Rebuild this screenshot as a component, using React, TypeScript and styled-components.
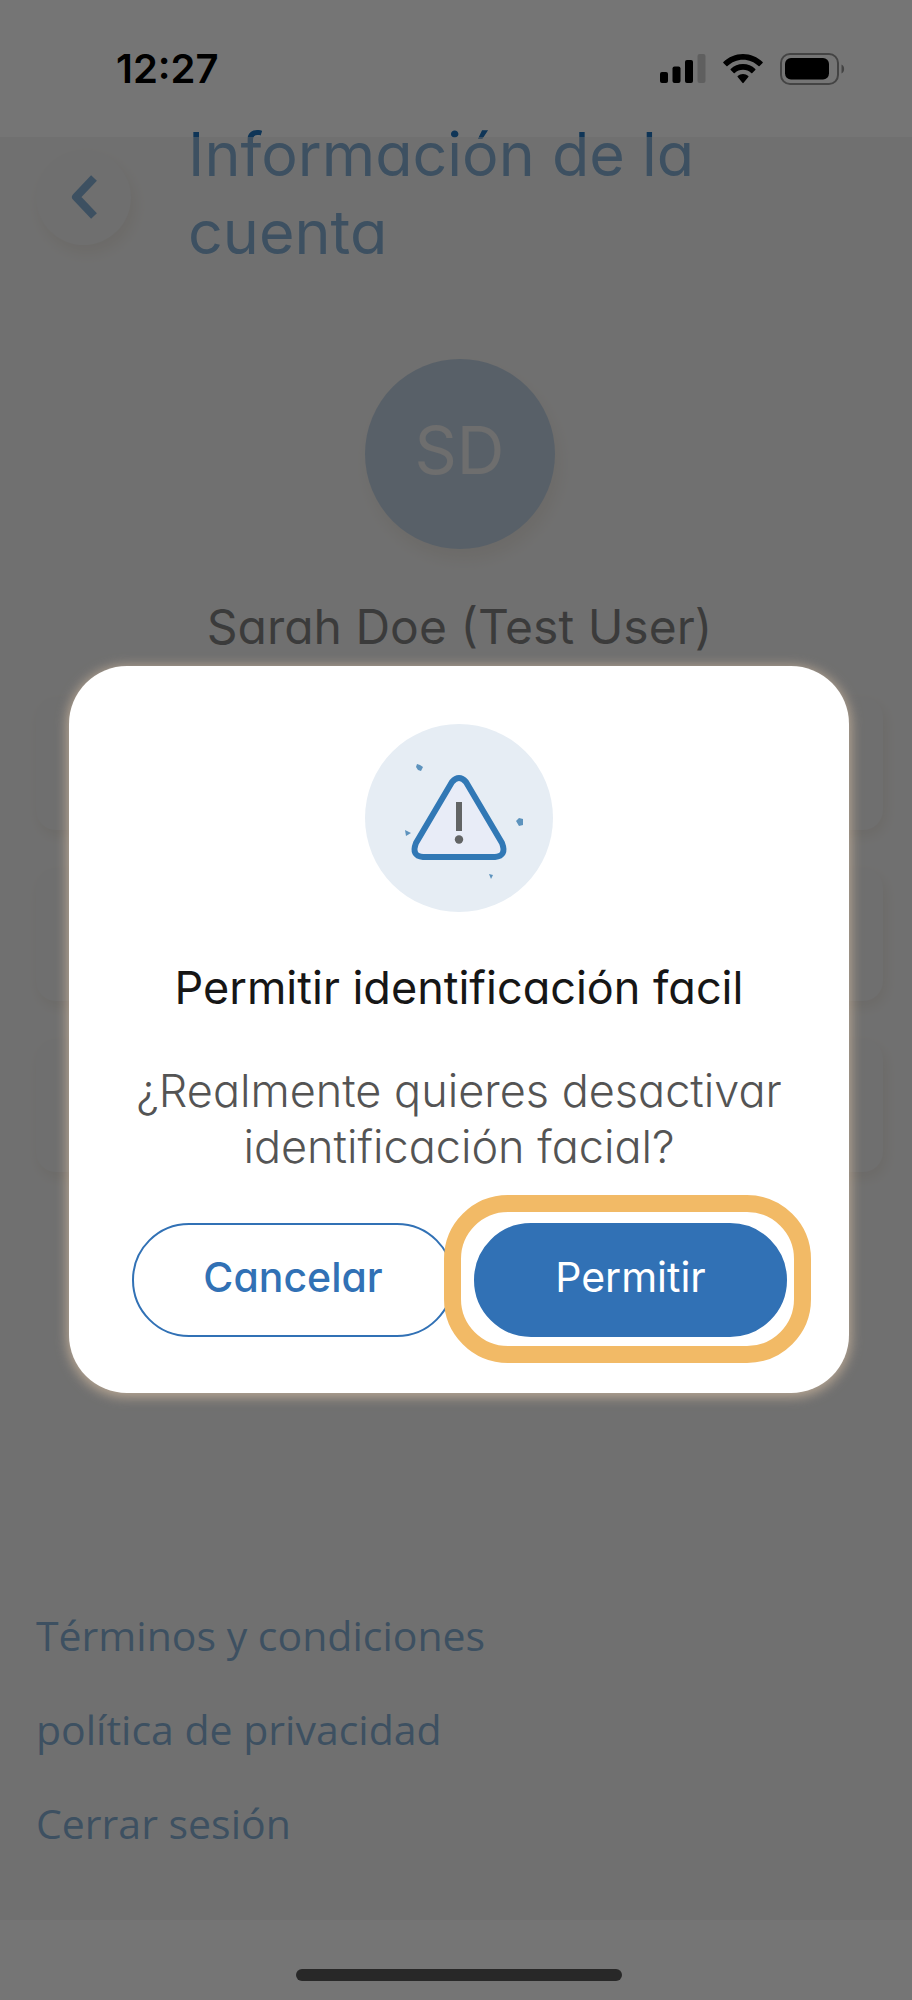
import React from "react";
import styled, { createGlobalStyle } from "styled-components";

const blue = "#3171b5";
const pageBlue = "#2175bd";
const rounded = `"Inter", "Lato", sans-serif`;

const GlobalStyle = createGlobalStyle`
  * { box-sizing: border-box; }
  body { margin: 0; background: #fff; font-family: ${rounded}; font-feature-settings: "cv11"; }
  h1, h2, p, ul { margin: 0; padding: 0; font-weight: 400; }
  button { font: inherit; font-feature-settings: inherit; cursor: pointer; }
`;

const Screen = styled.div`
  position: relative;
  display: flex;
  flex-direction: column;
  min-height: 100vh;
  background: #fff;
`;

const StatusBar = styled.div`
  display: flex;
  align-items: center;
  justify-content: space-between;
  height: 137px;
  padding: 0 67px 0 116px;
`;

const Time = styled.time`
  font-size: 40px;
  font-weight: 600;
  line-height: 48px;
  color: #000;
`;

const StatusIcons = styled.div`
  display: flex;
  align-items: center;
  gap: 17px;
  svg { display: block; }
`;

const Content = styled.main`
  position: relative;
  flex: 1;
  display: flex;
  flex-direction: column;
  padding: 0 29px 70px 36px;

  /* translucent veil over the page while a dialog is open */
  &::after {
    content: "";
    position: absolute;
    inset: 0;
    background: rgba(233, 233, 233, 0.5);
    pointer-events: none;
  }
`;

const Header = styled.header`
  display: flex;
  align-items: center;
  gap: 57px;
  margin-top: -22px;
`;

const BackButton = styled.button`
  display: flex;
  align-items: center;
  justify-content: center;
  flex: none;
  width: 95px;
  height: 95px;
  border: 0;
  border-radius: 50%;
  background: #f8f8f8;
  box-shadow: 4px 8px 16px rgba(190, 165, 130, 0.3);
`;

const Title = styled.h1`
  flex: 1;
  max-width: 560px;
  padding-bottom: 8px;
  font-size: 61px;
  line-height: 78px;
  color: ${pageBlue};
`;

const Profile = styled.section`
  display: flex;
  flex-direction: column;
  align-items: center;
  gap: 48px;
  margin-top: 80px;
`;

const Avatar = styled.div`
  display: flex;
  align-items: center;
  justify-content: center;
  width: 190px;
  height: 190px;
  padding-bottom: 8px;
  border-radius: 50%;
  background: #96b9dc;
  box-shadow: 4px 10px 18px rgba(190, 165, 130, 0.3);
  font-size: 66px;
  color: #f4f4f4;
`;

const Name = styled.h2`
  font-size: 48px;
  line-height: 60px;
  color: #181818;
`;

const Cards = styled.ul`
  display: flex;
  flex-direction: column;
  gap: 38px;
  margin-top: 40px;
  list-style: none;
`;

const Card = styled.li`
  height: 133px;
  border-radius: 20px;
  background: #f8f8f8;
  box-shadow: 3px 6px 14px rgba(190, 165, 130, 0.3);
`;

const Links = styled.nav`
  display: flex;
  flex-direction: column;
  align-items: flex-start;
  gap: 40px;
  margin-top: auto;
`;

const FooterLink = styled.a`
  font-family: "Open Sans", sans-serif;
  font-size: 41px;
  line-height: 54px;
  color: ${pageBlue};
  text-decoration: none;
`;

const HomeArea = styled.div`
  display: flex;
  justify-content: center;
  height: 80px;
  padding: 49px 0 0 6px;
`;

const HomeIndicator = styled.div`
  width: 36%;
  height: 12px;
  border-radius: 6px;
  background: #575757;
`;

const Scrim = styled.div`
  position: absolute;
  inset: 0;
  display: flex;
  align-items: center;
  justify-content: center;
  padding: 58px 63px 0 69px;
  background: rgba(0, 0, 0, 0.54);
`;

const Dialog = styled.section`
  display: flex;
  flex-direction: column;
  align-items: center;
  width: 100%;
  padding: 58px 40px 56px;
  border-radius: 58px;
  background: #fff;
  box-shadow: 0 2px 12px 2px rgba(214, 190, 162, 0.7);
  text-align: center;
  svg { display: block; }
`;

const DialogTitle = styled.h2`
  margin-top: 50px;
  font-size: 45px;
  line-height: 52px;
  color: #161616;
`;

const Message = styled.p`
  margin-top: 49px;
  font-size: 45px;
  line-height: 56px;
  font-weight: 300;
  color: #545454;
`;

const Actions = styled.div`
  display: grid;
  grid-template-columns: 322fr 313fr;
  gap: 20px;
  width: 100%;
  margin-top: 48px;
  padding: 0 22px 0 23px;
`;

const ActionButton = styled.button<{ $primary?: boolean }>`
  width: 100%;
  height: 114px;
  padding: 0 0 6px;
  border: 2px solid ${blue};
  border-radius: 57px;
  background: ${(p) => (p.$primary ? blue : "#fff")};
  color: ${(p) => (p.$primary ? "#fff" : blue)};
  font-size: 41px;
  font-weight: ${(p) => (p.$primary ? 400 : 500)};
`;

const Highlighted = styled.div`
  position: relative;

  &::after {
    content: "";
    position: absolute;
    inset: -28px -24px -26px -30px;
    border: 17px solid #f2ba66;
    border-radius: 64px;
    pointer-events: none;
  }
`;

const SignalIcon = () => (
  <svg width="46" height="30" viewBox="0 0 46 30" aria-hidden="true">
    <rect x="0" y="18" width="8" height="11" rx="2" />
    <rect x="12.500" y="12.500" width="8" height="16.500" rx="2" />
    <rect x="25" y="6" width="8" height="23" rx="2" />
    <rect x="37.500" y="0" width="8" height="29" rx="2" fill="#d0d0d0" />
  </svg>
);

const WifiIcon = () => (
  <svg width="40" height="30" viewBox="0 0 40 30" aria-hidden="true">
    <path d="M20 0C12.500 0 5.500 3 .4 8a.8.800 0 0 0 0 1.100l3 3a.8.800 0 0 0 1.100 0C8.600 8.100 14.100 5.800 20 5.800s11.400 2.300 15.500 6.300a.8.800 0 0 0 1.100 0l3-3a.8.800 0 0 0 0-1.100C34.500 3 27.500 0 20 0Z" />
    <path d="M20 10c-4.700 0-9 1.800-12.300 4.900a.8.800 0 0 0 0 1.100l3 3a.8.800 0 0 0 1.100 0c2.200-2 5.100-3.200 8.200-3.200s6 1.200 8.200 3.200a.8.800 0 0 0 1.100 0l3-3a.8.800 0 0 0 0-1.100C29 11.800 24.700 10 20 10Z" />
    <path d="M20 20c-2 0-3.900.8-5.300 2a.8.800 0 0 0 0 1.100l4.700 5.700a.8.800 0 0 0 1.200 0l4.700-5.700a.8.800 0 0 0 0-1.100C23.900 20.800 22 20 20 20Z" />
  </svg>
);

const BatteryIcon = () => (
  <svg width="65" height="32" viewBox="0 0 65 32" aria-hidden="true">
    <rect x="1" y="1" width="57" height="30" rx="9" fill="none" stroke="#959595" strokeWidth="2" />
    <rect x="5" y="5" width="44" height="21.500" rx="6" />
    <path d="M61.500 11.500c3.500 1.500 3.500 7.500 0 9Z" fill="#959595" />
  </svg>
);

const ChevronIcon = () => (
  <svg width="30" height="46" viewBox="0 0 30 46" aria-hidden="true">
    <path d="M25 4 7 23l18 19" fill="none" stroke={pageBlue} strokeWidth="8" strokeLinejoin="round" />
  </svg>
);

const WarningIcon = () => (
  <svg width="188" height="188" viewBox="0 0 188 188" aria-hidden="true">
    <circle cx="94" cy="94" r="94" fill="#e6edf4" />
    <path
      d="M87 58Q94 50 101 58L137 119Q142 132 130 133H58Q46 132 51 119Z"
      fill="#e8ecf7"
      stroke="#3178b5"
      strokeWidth="6"
      strokeLinejoin="round"
    />
    <path d="M94 78v29" stroke="#626465" strokeWidth="6" />
    <circle cx="94" cy="115.500" r="4.200" fill="#626465" />
    <g fill="#5d93bd">
      <path d="m52 40 3 1 3 2-2 4-3-1-2-3Z" />
      <path d="m40 106 6 3-5 3Z" />
      <path d="m151 97 3-3 4 1v6l-4 1Z" />
      <path d="m124 150 4 1-2 4Z" />
    </g>
  </svg>
);

export default function App() {
  return (
    <>
      <GlobalStyle />
      <Screen>
        <StatusBar>
          <Time>12:27</Time>
          <StatusIcons>
            <SignalIcon />
            <WifiIcon />
            <BatteryIcon />
          </StatusIcons>
        </StatusBar>
        <Content>
          <Header>
            <BackButton aria-label="Volver">
              <ChevronIcon />
            </BackButton>
            <Title>Información de la cuenta</Title>
          </Header>
          <Profile>
            <Avatar>SD</Avatar>
            <Name>Sarah Doe (Test User)</Name>
          </Profile>
          <Cards>
            <Card />
            <Card />
            <Card />
          </Cards>
          <Links>
            <FooterLink href="#terminos">Términos y condiciones</FooterLink>
            <FooterLink href="#privacidad">política de privacidad</FooterLink>
            <FooterLink href="#salir">Cerrar sesión</FooterLink>
          </Links>
        </Content>
        <HomeArea>
          <HomeIndicator />
        </HomeArea>
        <Scrim>
          <Dialog role="dialog" aria-modal="true" aria-labelledby="dialog-title">
            <WarningIcon />
            <DialogTitle id="dialog-title">Permitir identificación facil</DialogTitle>
            <Message>¿Realmente quieres desactivar identificación facial?</Message>
            <Actions>
              <ActionButton>Cancelar</ActionButton>
              <Highlighted>
                <ActionButton $primary>Permitir</ActionButton>
              </Highlighted>
            </Actions>
          </Dialog>
        </Scrim>
      </Screen>
    </>
  );
}
